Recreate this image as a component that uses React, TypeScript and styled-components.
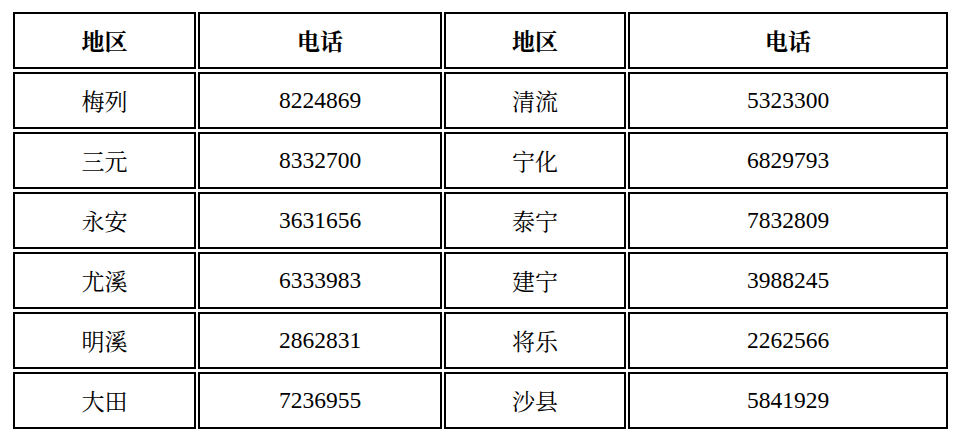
import React from 'react';
import styled, { createGlobalStyle } from 'styled-components';

const GlobalStyle = createGlobalStyle`
  html, body {
    margin: 0;
    padding: 0;
    background: #fff;
  }
  body {
    padding: 9px 0 0 11px;
    font-family: "Liberation Serif", "Noto Serif CJK SC", "Noto Sans CJK SC", serif;
    color: #000;
  }
`;

const Table = styled.table`
  border-collapse: separate;
  border-spacing: 2px 3px;
  margin: 0;
  table-layout: fixed;
  width: 939px;
`;

const Col = styled.col<{ $w: number }>`
  width: ${(p) => p.$w}px;
`;

const HeadCell = styled.th`
  box-sizing: border-box;
  height: 57px;
  border: 2px solid #000;
  padding: 0;
  font-size: 23px;
  font-weight: bold;
  text-align: center;
  vertical-align: middle;
`;

const Cell = styled.td<{ $num?: boolean }>`
  box-sizing: border-box;
  height: 57px;
  border: 2px solid #000;
  padding: 0;
  font-size: ${(p) => (p.$num ? '23.5px' : '23px')};
  font-weight: normal;
  text-align: center;
  vertical-align: middle;
`;

const rows: [string, string, string, string][] = [
  ['梅列', '8224869', '清流', '5323300'],
  ['三元', '8332700', '宁化', '6829793'],
  ['永安', '3631656', '泰宁', '7832809'],
  ['尤溪', '6333983', '建宁', '3988245'],
  ['明溪', '2862831', '将乐', '2262566'],
  ['大田', '7236955', '沙县', '5841929'],
];

export default function App() {
  return (
    <>
      <GlobalStyle />
      <Table>
        <colgroup>
          <Col $w={183} />
          <Col $w={244} />
          <Col $w={182} />
          <Col $w={320} />
        </colgroup>
        <thead>
          <tr>
            <HeadCell>地区</HeadCell>
            <HeadCell>电话</HeadCell>
            <HeadCell>地区</HeadCell>
            <HeadCell>电话</HeadCell>
          </tr>
        </thead>
        <tbody>
          {rows.map((r) => (
            <tr key={r[0]}>
              {r.map((v, i) => (
                <Cell key={i} $num={i % 2 === 1}>
                  {v}
                </Cell>
              ))}
            </tr>
          ))}
        </tbody>
      </Table>
    </>
  );
}
